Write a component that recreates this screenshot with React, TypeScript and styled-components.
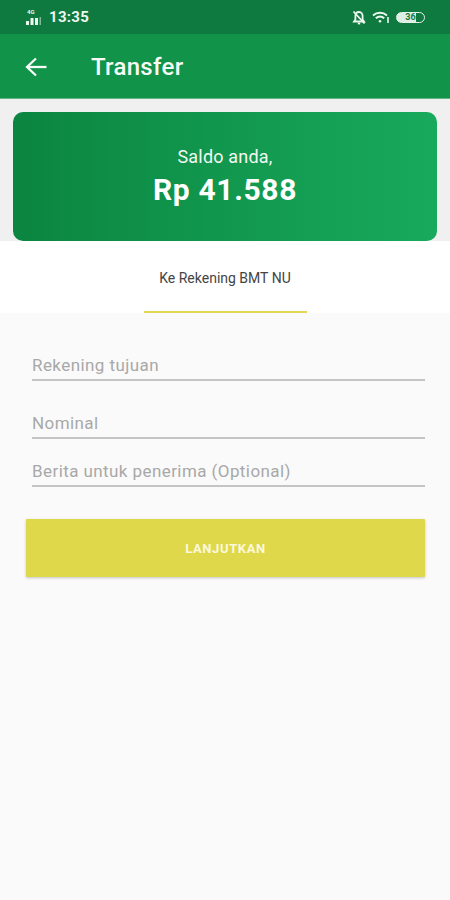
import React from "react";
import styled, { createGlobalStyle } from "styled-components";

const Global = createGlobalStyle`
  html, body {
    margin: 0;
    padding: 0;
    background: #fafafa;
    font-family: Roboto, "Liberation Sans", sans-serif;
  }
  * { box-sizing: border-box; }
`;

const Page = styled.div`
  width: 450px;
  height: 900px;
  background: #fafafa;
  overflow: hidden;
  display: flex;
  flex-direction: column;
`;

const StatusBar = styled.div`
  height: 34px;
  background: #0f7a3f;
  color: #eef6f0;
  display: flex;
  align-items: center;
  justify-content: space-between;
  padding: 0 25px;
`;

const StatusLeft = styled.div`
  display: flex;
  align-items: center;
  gap: 7px;
`;

const Clock = styled.span`
  font-size: 15px;
  font-weight: 700;
  letter-spacing: 0.3px;
`;

const StatusRight = styled.div`
  display: flex;
  align-items: center;
  gap: 6px;
`;

const Battery = styled.div`
  width: 29px;
  height: 11px;
  border: 1.5px solid #e6f1ea;
  border-radius: 6px;
  display: flex;
  align-items: center;
  justify-content: center;
  font-size: 9px;
  font-weight: 700;
  color: #0f7a3f;
  overflow: hidden;
  background: linear-gradient(90deg, #dfeee5 70%, transparent 70%);
`;

const AppBar = styled.header`
  height: 65px;
  background: #11934a;
  border-bottom: 1px solid #5fb884;
  display: flex;
  align-items: center;
  padding: 2px 24px 0;
  gap: 43px;
  color: #f6fbf8;
`;

const BackButton = styled.span`
  display: flex;
  width: 24px;
  height: 24px;
`;

const Title = styled.h1`
  margin: 0;
  font-size: 24px;
  font-weight: 500;
  letter-spacing: 0.3px;
`;

const BalanceZone = styled.div`
  background: #f0f0f0;
  padding: 13px 13px 0;
  height: 142px;
`;

const BalanceCard = styled.section`
  height: 129px;
  border-radius: 10px;
  background: linear-gradient(90deg, #0b8540 0%, #18aa5c 100%);
  color: #fff;
  display: flex;
  flex-direction: column;
  align-items: center;
  padding-top: 35px;
`;

const BalanceLabel = styled.div`
  font-size: 18px;
  line-height: 20px;
  letter-spacing: 0.2px;
  color: #f1f8f3;
`;

const BalanceValue = styled.div`
  font-size: 30px;
  font-weight: 700;
  line-height: 36px;
  margin-top: 5px;
  letter-spacing: 0.65px;
`;

const TabBar = styled.nav`
  height: 72px;
  background: #fff;
  display: flex;
  justify-content: center;
`;

const Tab = styled.div`
  width: 163px;
  height: 72px;
  border-bottom: 2px solid #e3d84f;
  display: flex;
  justify-content: center;
  padding-top: 29px;
  font-size: 14px;
  line-height: 16px;
  color: #444;
`;

const Form = styled.form`
  display: flex;
  flex-direction: column;
  padding: 0 25px 0 26px;
`;

const Field = styled.div<{ $top: number }>`
  margin: ${(p) => p.$top}px 0 0 6px;
  height: 26px;
  border-bottom: 2px solid #c4c4c4;
  font-size: 17px;
  line-height: 21px;
  letter-spacing: 0.42px;
  color: #a8a8a8;
`;

const SubmitButton = styled.button`
  margin-top: 32px;
  height: 58px;
  border: 0;
  border-radius: 1px;
  background: #e0d84b;
  color: #fbf9dc;
  font-family: inherit;
  font-size: 13px;
  font-weight: 700;
  letter-spacing: 0.6px;
  box-shadow: 0 1px 3px rgba(0, 0, 0, 0.22);
`;

const SignalIcon = () => (
  <svg width="17" height="18" viewBox="0 0 17 18" fill="#eef6f0">
    <text x="2" y="6" fontSize="6" fontWeight="700" fontFamily="Roboto">4G</text>
    <rect x="1" y="13" width="3" height="4" />
    <rect x="5.5" y="10" width="3" height="7" />
    <rect x="10" y="10" width="3" height="7" />
    <rect x="14.5" y="9" width="1.5" height="8" opacity="0.5" />
  </svg>
);

const MutedBellIcon = () => (
  <svg width="14" height="15" viewBox="0 0 14 15" fill="none" stroke="#eef6f0" strokeWidth="1.8">
    <path d="M7 2c-2.500 0-3.600 1.900-3.600 4v3.500L2 11.500h10l-1.400-2V6C10.600 3.900 9.500 2 7 2z" />
    <path d="M5.800 13.500h2.400" />
    <path d="M1.500 1.500l11 12" />
  </svg>
);

const WifiIcon = () => (
  <svg width="18" height="13" viewBox="0 0 18 13" fill="none" stroke="#eef6f0" strokeWidth="2">
    <path d="M1 4.500c4-3.600 10-3.600 14 0" />
    <path d="M3.800 7.300c2.500-2.200 5.900-2.200 8.400 0" />
    <circle cx="8" cy="10.300" r="1.300" fill="#eef6f0" stroke="none" />
    <path d="M16 6v6" strokeWidth="1.600" />
  </svg>
);

const BackArrow = () => (
  <svg width="24" height="24" viewBox="0 0 24 24" fill="none" stroke="#f6fbf8" strokeWidth="2.300">
    <path d="M22.500 12H3" />
    <path d="M12 3.500L3 12l9 8.500" />
  </svg>
);

const App: React.FC = () => {
  return (
    <>
      <Global />
      <Page>
        <StatusBar>
          <StatusLeft>
            <SignalIcon />
            <Clock>13:35</Clock>
          </StatusLeft>
          <StatusRight>
            <MutedBellIcon />
            <WifiIcon />
            <Battery>36</Battery>
          </StatusRight>
        </StatusBar>
        <AppBar>
          <BackButton>
            <BackArrow />
          </BackButton>
          <Title>Transfer</Title>
        </AppBar>
        <BalanceZone>
          <BalanceCard>
            <BalanceLabel>Saldo anda,</BalanceLabel>
            <BalanceValue>Rp 41.588</BalanceValue>
          </BalanceCard>
        </BalanceZone>
        <TabBar>
          <Tab>Ke Rekening BMT NU</Tab>
        </TabBar>
        <Form>
          <Field $top={42}>Rekening tujuan</Field>
          <Field $top={32}>Nominal</Field>
          <Field $top={22}>Berita untuk penerima (Optional)</Field>
          <SubmitButton type="button">LANJUTKAN</SubmitButton>
        </Form>
      </Page>
    </>
  );
};

export default App;
